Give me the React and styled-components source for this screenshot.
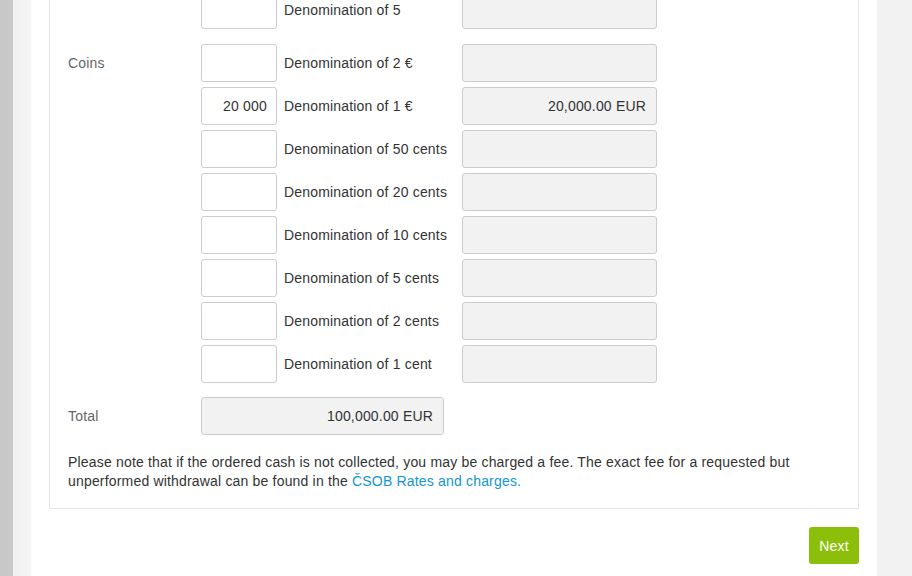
import React from 'react'
import styled, { createGlobalStyle } from 'styled-components'

const GlobalStyle = createGlobalStyle`
    html, body {
        margin: 0;
        padding: 0;
    }
    body {
        font-family: "Liberation Sans", Arial, sans-serif;
        font-size: 14px;
        letter-spacing: 0.18px;
        color: #333;
        background: #f2f2f2;
    }
`;

const Viewport = styled.div`
    display: flex;
    height: 576px;
    overflow: hidden;
`;

const SideBar = styled.div`
    width: 13px;
    flex: none;
    background: #c8c8c8;
`;

const Gutter = styled.div`
    width: 18px;
    flex: none;
    background: linear-gradient(to right, #f0f0f0, #f5f5f5);
`;

const Page = styled.main`
    width: 846px;
    flex: none;
    background: #fff;
    padding: 0 18px;
    box-sizing: border-box;
`;

const Scroller = styled.div`
    margin-top: -9px;
`;

const Panel = styled.section`
    border: 1px solid #e5e5e5;
    border-top: none;
    padding: 0 18px 17px 18px;
`;

const Group = styled.div`
    display: grid;
    grid-template-columns: 133px 1fr;
    margin-bottom: ${props => props.spaced ? "15px" : "14px"};
`;

const GroupLabel = styled.div`
    color: #666;
    height: 37px;
    display: flex;
    align-items: center;
`;

const Rows = styled.div`
    display: flex;
    flex-direction: column;
    gap: 5px;
`;

const Row = styled.div`
    display: grid;
    grid-template-columns: 76px 185px 195px;
    align-items: center;
`;

const Field = styled.div`
    height: 38px;
    box-sizing: border-box;
    border: 1px solid #ccc;
    border-radius: 3px;
    background: ${props => props.readOnly ? "#f2f2f2" : "#fff"};
    display: flex;
    align-items: center;
    justify-content: flex-end;
    padding: 0 ${props => props.readOnly ? "10px" : "9px"};
    color: #333;
    width: ${props => props.width || "auto"};
`;

const Denom = styled.div`
    padding-left: 7px;
    white-space: nowrap;
`;

const Note = styled.p`
    margin: 18px 0 0 0;
    line-height: 19px;
`;

const Link = styled.a`
    color: #1196d2;
    text-decoration: none;
`;

const Actions = styled.div`
    display: flex;
    justify-content: flex-end;
    padding-top: 18px;
`;

const NextButton = styled.button`
    height: 37px;
    width: 50px;
    padding: 0;
    border: none;
    border-radius: 3px;
    background: #8cbf0a;
    color: #fff;
    font-family: inherit;
    font-size: 14px;
    letter-spacing: 0.18px;
    cursor: pointer;
`;

const groups = [
    {
        label: '',
        rows: [{ name: 'Denomination of 5' }]
    },
    {
        label: 'Coins',
        rows: [
            { name: 'Denomination of 2 €' },
            { name: 'Denomination of 1 €', count: '20 000', sum: '20,000.00 EUR' },
            { name: 'Denomination of 50 cents' },
            { name: 'Denomination of 20 cents' },
            { name: 'Denomination of 10 cents' },
            { name: 'Denomination of 5 cents' },
            { name: 'Denomination of 2 cents' },
            { name: 'Denomination of 1 cent' },
        ]
    }
]

export default function App() {
    return (
        <>
            <GlobalStyle />
            <Viewport>
                <SideBar />
                <Gutter />
                <Page>
                    <Scroller>
                        <Panel>
                            {groups.map((g, i) => (
                                <Group key={i} spaced={i === 0}>
                                    <GroupLabel>{g.label}</GroupLabel>
                                    <Rows>
                                        {g.rows.map(r => (
                                            <Row key={r.name}>
                                                <Field>{r.count}</Field>
                                                <Denom>{r.name}</Denom>
                                                <Field readOnly>{r.sum}</Field>
                                            </Row>
                                        ))}
                                    </Rows>
                                </Group>
                            ))}
                            <Group>
                                <GroupLabel>Total</GroupLabel>
                                <Field readOnly width="243px">100,000.00 EUR</Field>
                            </Group>
                            <Note>
                                Please note that if the ordered cash is not collected, you may be charged a fee. The exact fee for a requested but unperformed withdrawal can be found in the <Link href="#">ČSOB Rates and charges.</Link>
                            </Note>
                        </Panel>
                        <Actions>
                            <NextButton>Next</NextButton>
                        </Actions>
                    </Scroller>
                </Page>
            </Viewport>
        </>
    )
}
